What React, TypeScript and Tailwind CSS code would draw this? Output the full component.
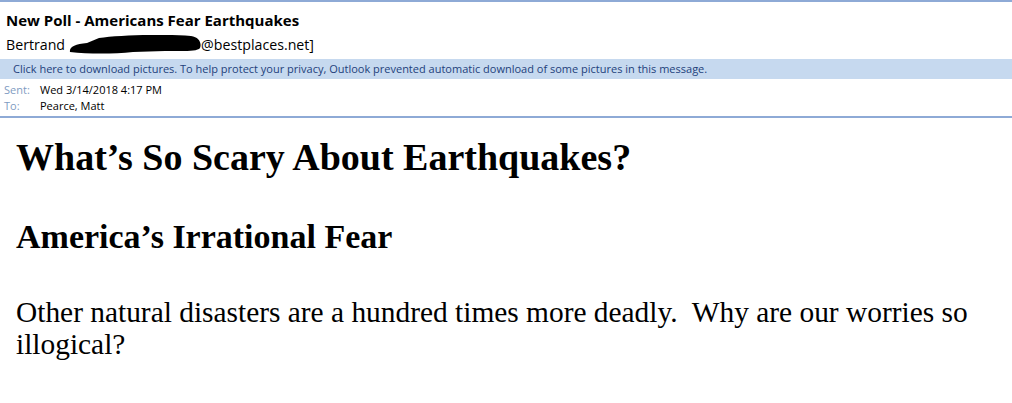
export default function App() {
  return (
    <div className="w-[1012px] h-[403px] bg-white overflow-hidden">
      {/* message header */}
      <div className="border-t-2 border-[#8eaad6] pt-[8px] font-['Open_Sans',sans-serif]">
        <div className="pl-[6px] text-[15px] font-bold leading-[20px] text-black">
          New Poll - Americans Fear Earthquakes
        </div>
        <div className="pl-[6px] mt-[5px] text-[14.2px] leading-[20px] text-black flex items-center">
          <span>Bertrand</span>
          <svg width="132" height="19" viewBox="0 0 132 19" className="ml-[4px] -mt-[1px]">
            <path
              d="M1 17 C0 12 6 9 18 8 L30 3 C50 0 96 -1 122 1 C130 2 133 8 131 13 C128 17 112 16 96 16 L64 17 C44 19 20 19 1 17 Z"
              fill="#000"
            />
          </svg>
          <span>@bestplaces.net]</span>
        </div>
        <div className="mt-[4px] h-[20px] bg-[#c6d9ef] pl-[13px] text-[11px] leading-[20px] text-[#23417b]">
          Click here to download pictures. To help protect your privacy, Outlook prevented automatic download of some pictures in this message.
        </div>
        <div className="pl-[4px] pt-[3px] pb-[2px] text-[11px] leading-[16px] text-black">
          <div className="flex">
            <span className="w-[36px] text-[#7f9cc2]">Sent:</span>
            <span>Wed 3/14/2018 4:17 PM</span>
          </div>
          <div className="flex">
            <span className="w-[36px] text-[#7f9cc2]">To:</span>
            <span>Pearce, Matt</span>
          </div>
        </div>
        <div className="h-[2px] bg-[#8eaad6]" />
      </div>

      {/* message body */}
      <div className="pl-[16px] font-['Liberation_Serif',serif] text-black">
        <h1 className="mt-[18px] text-[38px] font-bold leading-[42px]">What’s So Scary About Earthquakes?</h1>
        <h2 className="mt-[40px] text-[34px] font-bold leading-[38px]">America’s Irrational Fear</h2>
        <p className="mt-[40px] w-[965px] text-[29.4px] leading-[32px]">
          Other natural disasters are a hundred times more deadly.&nbsp; Why are our worries so illogical?
        </p>
      </div>
    </div>
  );
}
